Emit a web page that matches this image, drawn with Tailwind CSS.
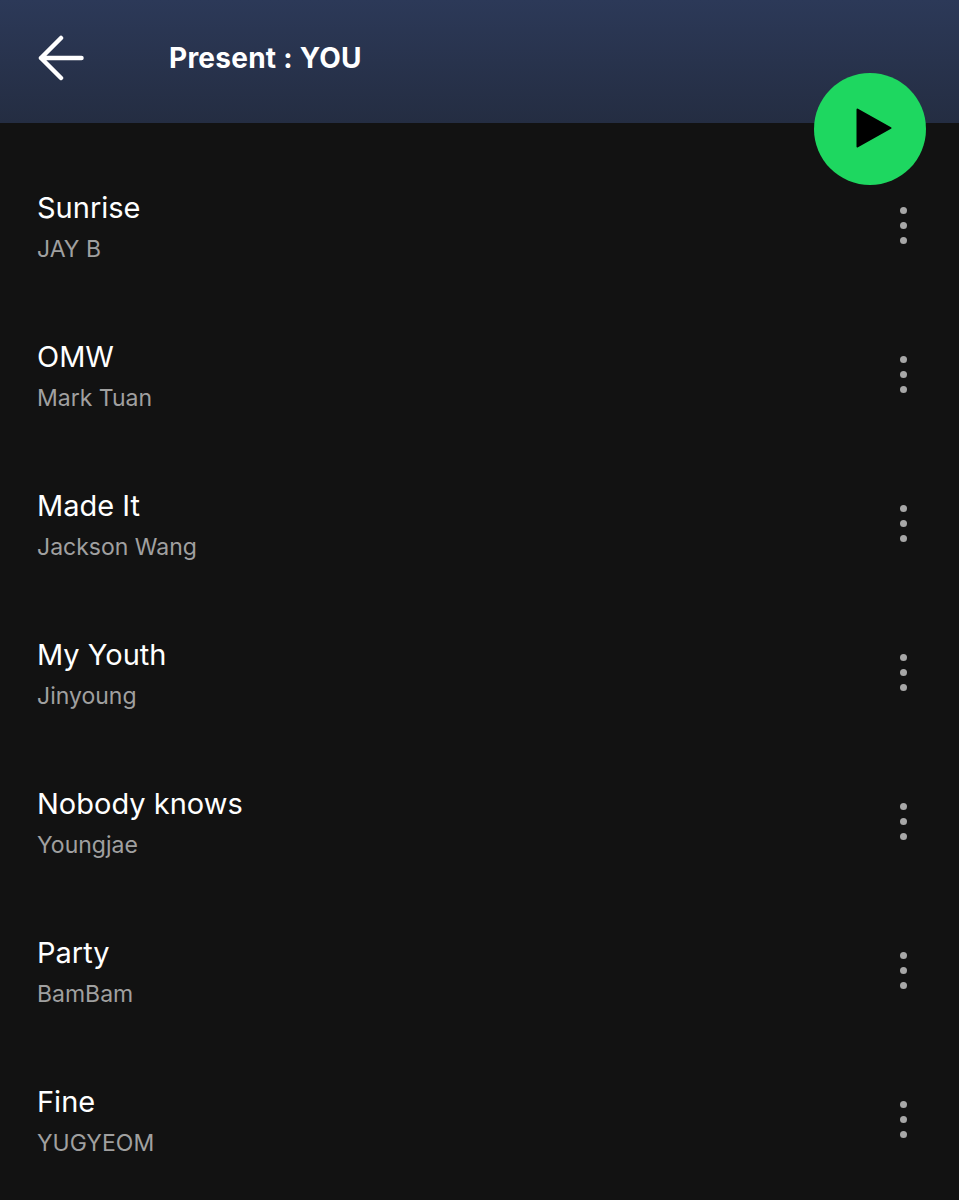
<!DOCTYPE html>
<html lang="en">
<head>
    <meta charset="UTF-8">
    <title>Present : YOU</title>
    <script src="https://cdn.jsdelivr.net/npm/@tailwindcss/browser@4"></script>
</head>
<body class="bg-[#121212] font-['Inter',sans-serif] text-white">
    <div class="relative w-[959px] h-[1200px] overflow-hidden">
        <!-- Header -->
        <header class="h-[123px] flex items-center pl-[38px] pb-[8px] bg-gradient-to-b from-[#2c3958] to-[#242d42]">
            <svg class="w-[46px] h-[46px]" viewBox="0 0 46 46" fill="none" stroke="white" stroke-width="4.5" stroke-linecap="round" stroke-linejoin="round">
                <path d="M3 23H43.5M23 3L3 23L23 43"/>
            </svg>
            <h1 class="ml-[85px] text-[28px] font-bold leading-none tracking-[0.25px]">Present : YOU</h1>
        </header>

        <!-- Play button -->
        <button class="absolute left-[814px] top-[73px] w-[112px] h-[112px] rounded-full bg-[#1ed760] flex items-center justify-center">
            <svg class="w-[36px] h-[40px] ml-[8px] mb-[2px]" viewBox="0 0 36 40" fill="black" stroke="black" stroke-width="2" stroke-linejoin="round">
                <path d="M1.5 1.5L34.5 20L1.5 38.5Z"/>
            </svg>
        </button>

        <!-- Tracks -->
        <ul class="pl-[37px] pr-[52px] pt-[29px]">
            <li class="h-[149px] flex items-center justify-between">
                <div>
                    <div class="text-[29px] leading-[36px]">Sunrise</div>
                    <div class="mt-[8px] text-[23px] leading-[30px] text-[#a0a0a0]">JAY B</div>
                </div>
                <div class="mb-[2px] flex flex-col gap-[8px]"><span class="w-[7px] h-[7px] rounded-full bg-[#a7a7a7]"></span><span class="w-[7px] h-[7px] rounded-full bg-[#a7a7a7]"></span><span class="w-[7px] h-[7px] rounded-full bg-[#a7a7a7]"></span></div>
            </li>
            <li class="h-[149px] flex items-center justify-between">
                <div>
                    <div class="text-[29px] leading-[36px]">OMW</div>
                    <div class="mt-[8px] text-[23px] leading-[30px] text-[#a0a0a0]">Mark Tuan</div>
                </div>
                <div class="mb-[2px] flex flex-col gap-[8px]"><span class="w-[7px] h-[7px] rounded-full bg-[#a7a7a7]"></span><span class="w-[7px] h-[7px] rounded-full bg-[#a7a7a7]"></span><span class="w-[7px] h-[7px] rounded-full bg-[#a7a7a7]"></span></div>
            </li>
            <li class="h-[149px] flex items-center justify-between">
                <div>
                    <div class="text-[29px] leading-[36px]">Made It</div>
                    <div class="mt-[8px] text-[23px] leading-[30px] text-[#a0a0a0]">Jackson Wang</div>
                </div>
                <div class="mb-[2px] flex flex-col gap-[8px]"><span class="w-[7px] h-[7px] rounded-full bg-[#a7a7a7]"></span><span class="w-[7px] h-[7px] rounded-full bg-[#a7a7a7]"></span><span class="w-[7px] h-[7px] rounded-full bg-[#a7a7a7]"></span></div>
            </li>
            <li class="h-[149px] flex items-center justify-between">
                <div>
                    <div class="text-[29px] leading-[36px]">My Youth</div>
                    <div class="mt-[8px] text-[23px] leading-[30px] text-[#a0a0a0]">Jinyoung</div>
                </div>
                <div class="mb-[2px] flex flex-col gap-[8px]"><span class="w-[7px] h-[7px] rounded-full bg-[#a7a7a7]"></span><span class="w-[7px] h-[7px] rounded-full bg-[#a7a7a7]"></span><span class="w-[7px] h-[7px] rounded-full bg-[#a7a7a7]"></span></div>
            </li>
            <li class="h-[149px] flex items-center justify-between">
                <div>
                    <div class="text-[29px] leading-[36px]">Nobody knows</div>
                    <div class="mt-[8px] text-[23px] leading-[30px] text-[#a0a0a0]">Youngjae</div>
                </div>
                <div class="mb-[2px] flex flex-col gap-[8px]"><span class="w-[7px] h-[7px] rounded-full bg-[#a7a7a7]"></span><span class="w-[7px] h-[7px] rounded-full bg-[#a7a7a7]"></span><span class="w-[7px] h-[7px] rounded-full bg-[#a7a7a7]"></span></div>
            </li>
            <li class="h-[149px] flex items-center justify-between">
                <div>
                    <div class="text-[29px] leading-[36px]">Party</div>
                    <div class="mt-[8px] text-[23px] leading-[30px] text-[#a0a0a0]">BamBam</div>
                </div>
                <div class="mb-[2px] flex flex-col gap-[8px]"><span class="w-[7px] h-[7px] rounded-full bg-[#a7a7a7]"></span><span class="w-[7px] h-[7px] rounded-full bg-[#a7a7a7]"></span><span class="w-[7px] h-[7px] rounded-full bg-[#a7a7a7]"></span></div>
            </li>
            <li class="h-[149px] flex items-center justify-between">
                <div>
                    <div class="text-[29px] leading-[36px]">Fine</div>
                    <div class="mt-[8px] text-[23px] leading-[30px] text-[#a0a0a0]">YUGYEOM</div>
                </div>
                <div class="mb-[2px] flex flex-col gap-[8px]"><span class="w-[7px] h-[7px] rounded-full bg-[#a7a7a7]"></span><span class="w-[7px] h-[7px] rounded-full bg-[#a7a7a7]"></span><span class="w-[7px] h-[7px] rounded-full bg-[#a7a7a7]"></span></div>
            </li>
        </ul>
    </div>
</body>
</html>
